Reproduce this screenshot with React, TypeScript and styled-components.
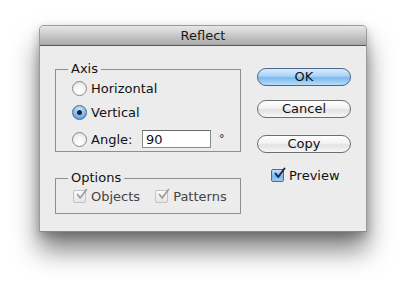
import * as React from 'react';
import styled, { createGlobalStyle, css } from 'styled-components';

const GlobalStyle = createGlobalStyle`
    html, body {
        margin: 0;
        background: #ffffff;
    }
    body {
        font-family: "DejaVu Sans", "Liberation Sans", sans-serif;
        font-size: 13px;
        color: #111;
    }
`;

const Check = ({ disabled }: { disabled?: boolean }) => (
    <svg width="13" height="13" viewBox="0 0 13 13">
        <path
            d="M2.5 6.5 L5.2 10 L11.5 1.5"
            fill="none"
            stroke={disabled ? '#9a9a9a' : '#1c2a48'}
            strokeWidth={disabled ? 1.6 : 2}
            strokeLinecap="round"
            strokeLinejoin="round"
        />
    </svg>
);

const RadioButton = ({ checked, label }: { checked?: boolean; label: string }) => (
    <RadioRow>
        <RadioDot checked={checked} />
        <span>{label}</span>
    </RadioRow>
);

const CheckItem = ({ label, checked, disabled }: { label: string; checked?: boolean; disabled?: boolean }) => (
    <CheckLabel disabled={disabled}>
        <CheckBox disabled={disabled}>{checked ? <Check disabled={disabled} /> : null}</CheckBox>
        <span>{label}</span>
    </CheckLabel>
);

export default function App() {
    return (
        <React.Fragment>
            <GlobalStyle />
            <Page>
                <Window>
                    <TitleBar>Reflect</TitleBar>
                    <Body>
                        <LeftCol>
                            <Group>
                                <Legend>Axis</Legend>
                                <RadioButton label="Horizontal" />
                                <RadioButton label="Vertical" checked />
                                <AngleRow>
                                    <RadioDot />
                                    <AngleLabel>Angle:</AngleLabel>
                                    <AngleInput defaultValue="90" />
                                    <Degree>°</Degree>
                                </AngleRow>
                            </Group>
                            <OptionsGroup>
                                <Legend>Options</Legend>
                                <CheckRow>
                                    <CheckItem label="Objects" checked disabled />
                                    <CheckItem label="Patterns" checked disabled />
                                </CheckRow>
                            </OptionsGroup>
                        </LeftCol>
                        <RightCol>
                            <PillButton primary>OK</PillButton>
                            <PillButton gap={14}>Cancel</PillButton>
                            <PillButton gap={17}>Copy</PillButton>
                            <PreviewRow>
                                <CheckItem label="Preview" checked />
                            </PreviewRow>
                        </RightCol>
                    </Body>
                </Window>
            </Page>
        </React.Fragment>
    );
}

const Page = styled.div`
    box-sizing: border-box;
    min-height: 285px;
    padding: 25px 0 0 39px;
`;

const Window = styled.div`
    width: 326px;
    border: 1px solid #9a9a9a;
    border-bottom-color: #8a8a8a;
    border-radius: 5px 5px 0 0;
    background: #ececec;
    display: flex;
    flex-direction: column;
    box-shadow: 0 18px 26px rgba(0, 0, 0, 0.5), 0 4px 10px rgba(0, 0, 0, 0.22);
`;

const TitleBar = styled.div`
    height: 19px;
    line-height: 19px;
    text-align: center;
    font-size: 13px;
    color: #1a1a1a;
    border-radius: 4px 4px 0 0;
    background: linear-gradient(#e8e8e8, #c8c8c8 50%, #a8a8a8);
    border-bottom: 1px solid #555;
`;

const Body = styled.div`
    display: flex;
    padding: 16px 15px 17px 15px;
    gap: 16px;
`;

const LeftCol = styled.div`
    width: 186px;
    display: flex;
    flex-direction: column;
`;

const RightCol = styled.div`
    width: 94px;
    display: flex;
    flex-direction: column;
    padding-top: 6px;
`;

const Group = styled.fieldset`
    margin: 0;
    padding: 0;
    border: 1px solid #8e8e8e;
    min-width: 0;
`;

const OptionsGroup = styled(Group)`
    margin-top: 19px;
    padding-bottom: 6px;
`;

const Legend = styled.legend`
    margin-left: 12px;
    padding: 0 3px;
    line-height: 14px;
    font-size: 13px;
    color: #111;
`;

const RadioRow = styled.div`
    display: flex;
    align-items: center;
    height: 24px;
    padding-left: 16px;
    gap: 4px;
`;

const AngleRow = styled(RadioRow)`
    margin-top: 3px;
`;

const RadioDot = styled.span<{ checked?: boolean }>`
    width: 15px;
    height: 15px;
    box-sizing: border-box;
    border-radius: 50%;
    flex: none;
    position: relative;
    ${({ checked }) =>
        checked
            ? css`
                  border: 1px solid #4b6c94;
                  background: radial-gradient(circle at 50% 30%, #d6ebfd 0%, #8fc1f0 45%, #3e8ad6 100%);
                  &::after {
                      content: '';
                      position: absolute;
                      left: 4px;
                      top: 4px;
                      width: 5px;
                      height: 5px;
                      border-radius: 50%;
                      background: #1c2636;
                  }
              `
            : css`
                  border: 1px solid #8a8a8a;
                  background: radial-gradient(circle at 50% 70%, #ffffff 0%, #f4f4f4 50%, #d4d4d4 100%);
              `}
`;

const AngleLabel = styled.span`
    width: 47px;
`;

const AngleInput = styled.input`
    width: 69px;
    height: 18px;
    box-sizing: border-box;
    border: 1px solid #8a8a8a;
    border-top-color: #6a6a6a;
    background: #fff;
    padding: 0 3px;
    font-family: "DejaVu Sans", "Liberation Sans", sans-serif;
    font-size: 13px;
    color: #111;
    outline: none;
`;

const Degree = styled.span`
    margin-left: 4px;
    align-self: flex-start;
    margin-top: 5px;
    font-size: 11px;
`;

const CheckRow = styled.div`
    display: flex;
    align-items: center;
    height: 22px;
    padding-left: 17px;
    gap: 15px;
`;

const CheckLabel = styled.label<{ disabled?: boolean }>`
    display: flex;
    align-items: center;
    gap: 5px;
    color: ${({ disabled }) => (disabled ? '#444' : '#111')};
`;

const CheckBox = styled.span<{ disabled?: boolean }>`
    width: 13px;
    height: 13px;
    box-sizing: border-box;
    display: flex;
    align-items: center;
    justify-content: center;
    flex: none;
    border-radius: 2px;
    ${({ disabled }) =>
        disabled
            ? css`
                  border: 1px solid #c2c2c2;
                  background: linear-gradient(#fafafa, #e6e6e6);
              `
            : css`
                  border: 1px solid #4b6c94;
                  background: linear-gradient(#c9e2fa, #7db6ec 55%, #9fcaf3);
              `}
    svg {
        margin-top: -3px;
        margin-right: -3px;
    }
`;

const PillButton = styled.button<{ primary?: boolean; gap?: number }>`
    height: 18px;
    width: 94px;
    margin-top: ${({ gap }) => gap || 0}px;
    border-radius: 9px;
    border: 1px solid ${({ primary }) => (primary ? '#4b6790' : '#6e6e6e')};
    font-family: "DejaVu Sans", "Liberation Sans", sans-serif;
    font-size: 13px;
    line-height: 16px;
    padding: 0;
    color: #111;
    background: ${({ primary }) =>
        primary
            ? 'linear-gradient(#d9ecfc, #a9d2f7 45%, #7bb9ee 55%, #b6def9)'
            : 'linear-gradient(#ffffff, #f3f3f3 45%, #e2e2e2 55%, #f7f7f7)'};
`;

const PreviewRow = styled.div`
    margin-top: 15px;
    padding-left: 14px;
    height: 14px;
    display: flex;
    align-items: center;
`;
